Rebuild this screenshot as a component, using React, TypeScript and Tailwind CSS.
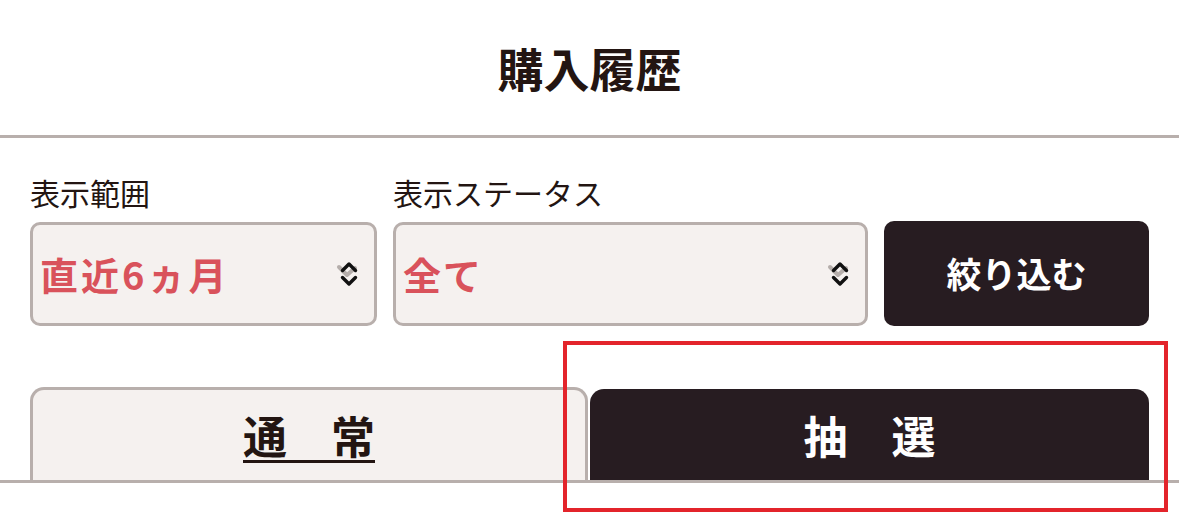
import React from "react";

const font = { fontFamily: '"Noto Sans CJK JP", "Noto Sans", sans-serif' };

function Chevron() {
  return (
    <svg width="34" height="34" viewBox="0 0 34 34" className="shrink-0">
      <polyline points="5,10 13,18 21,11" fill="none" stroke="#b5aeab" strokeWidth="4" strokeLinecap="round" strokeLinejoin="round" />
      <polyline points="8.5,13.5 15,7 21.5,13.5" fill="none" stroke="#111" strokeWidth="3.4" strokeLinecap="round" strokeLinejoin="round" />
      <polyline points="8.5,20.5 15,27 21.5,20.5" fill="none" stroke="#111" strokeWidth="3.4" strokeLinecap="round" strokeLinejoin="round" />
    </svg>
  );
}

export default function App() {
  return (
    <div className="relative w-[1179px] h-[521px] bg-white overflow-hidden text-[#231512]" style={font}>
      <div className="h-[135px] flex items-center justify-center pb-[2px]">
        <h1 className="text-[46px] font-bold leading-none">購入履歴</h1>
      </div>
      <div className="h-[3px] bg-[#b8afac]" />
      <div className="flex gap-[16px] px-[30px] pt-[37px]">
        <div className="w-[347px] flex flex-col">
          <div className="text-[30px] leading-[34px] h-[34px]">表示範囲</div>
          <div className="mt-[13px] h-[104px] border-[3px] border-[#b8afac] rounded-[10px] bg-[#f5f1ef] flex items-center justify-between pl-[7px] pr-[6px]">
            <span className="text-[38px] font-bold text-[#d9525b] leading-none tracking-[3px]">直近6ヵ月</span>
            <Chevron />
          </div>
        </div>
        <div className="w-[475px] flex flex-col">
          <div className="text-[30px] leading-[34px] h-[34px]">表示ステータス</div>
          <div className="mt-[13px] h-[104px] border-[3px] border-[#b8afac] rounded-[10px] bg-[#f5f1ef] flex items-center justify-between pl-[7px] pr-[6px]">
            <span className="text-[38px] font-bold text-[#d9525b] leading-none tracking-[2px]">全て</span>
            <Chevron />
          </div>
        </div>
        <div className="w-[265px] flex flex-col justify-end">
          <button className="h-[105px] rounded-[10px] bg-[#271c21] text-white text-[35px] font-bold flex items-center justify-center">
            絞り込む
          </button>
        </div>
      </div>
      <div className="mt-[61px] flex gap-[2px] px-[30px] items-end">
        <div className="w-[558px] h-[93px] border-[3px] border-b-0 border-[#b8afac] rounded-t-[14px] bg-[#f5f1ef] flex items-center justify-center">
          <span className="text-[44px] font-bold leading-none underline underline-offset-[6px] decoration-[3px]">通　常</span>
        </div>
        <div className="w-[559px] h-[91px] rounded-t-[14px] bg-[#271c21] flex items-center justify-center">
          <span className="text-[44px] font-bold leading-none text-white">抽　選</span>
        </div>
      </div>
      <div className="h-[3px] bg-[#b8afac]" />
      <div className="absolute left-[563px] top-[341px] w-[605px] h-[171px] border-4 border-[#e3242b] pointer-events-none" />
    </div>
  );
}
